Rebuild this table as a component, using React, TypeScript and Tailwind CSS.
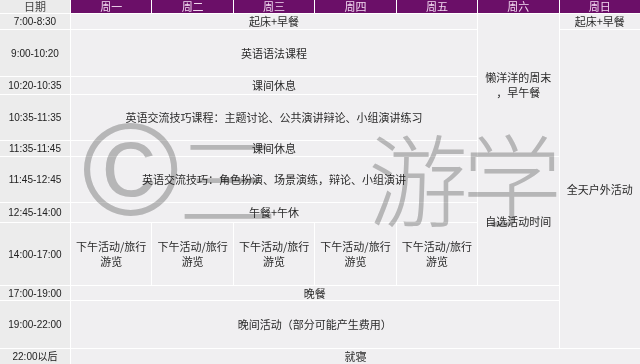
import React from 'react';

const cjk = { fontFamily: '"Noto Sans CJK SC", "Noto Sans", sans-serif' };
const num = { fontFamily: '"Liberation Sans", "Noto Sans CJK SC", sans-serif' };

const times = [
  '7:00-8:30',
  '9:00-10:20',
  '10:20-10:35',
  '10:35-11:35',
  '11:35-11:45',
  '11:45-12:45',
  '12:45-14:00',
  '14:00-17:00',
  '17:00-19:00',
  '19:00-22:00',
  '22:00以后',
];

const rowStart = [
  'row-start-2',
  'row-start-3',
  'row-start-4',
  'row-start-5',
  'row-start-6',
  'row-start-7',
  'row-start-8',
  'row-start-9',
  'row-start-10',
  'row-start-11',
  'row-start-12',
];

const days = ['周一', '周二', '周三', '周四', '周五', '周六', '周日'];
const dayCol = ['col-start-2', 'col-start-3', 'col-start-4', 'col-start-5', 'col-start-6', 'col-start-7', 'col-start-8'];

function Cell({ className, children }: { className: string; children?: React.ReactNode }) {
  return (
    <div className={`bg-[#f0eff1] flex items-center justify-center text-center text-[11px] leading-[15px] text-[#2a2a2a] ${className}`} style={cjk}>
      {children}
    </div>
  );
}

export default function App() {
  return (
    <div className="relative w-[640px] h-[364px] overflow-hidden bg-white">
      <div className="grid grid-cols-[70px_repeat(7,1fr)] grid-rows-[13px_15px_46px_17px_45px_15px_45px_19px_62px_14px_47px_15px] gap-px w-full h-full">
        {/* 表头 */}
        <div className="col-start-1 row-start-1 bg-[#ebebeb] flex items-center justify-center text-[11px] leading-[13px] text-[#444]" style={cjk}>
          日期
        </div>
        {days.map((d, i) => (
          <div key={d} className={`${dayCol[i]} row-start-1 bg-[#6b0f68] flex items-center justify-center text-[11px] leading-[13px] text-[#f2d9f0]`} style={cjk}>
            {d}
          </div>
        ))}

        {/* 时间列 */}
        {times.map((t, i) => (
          <div key={t} className={`col-start-1 ${rowStart[i]} bg-[#ececec] flex items-center justify-center text-[10px] leading-[13px] text-[#222]`} style={num}>
            {t}
          </div>
        ))}

        <Cell className="col-start-2 col-span-5 row-start-2">起床+早餐</Cell>
        <Cell className="col-start-7 row-start-2 row-span-5">
          <span>懒洋洋的周末<br />，早午餐</span>
        </Cell>
        <Cell className="col-start-8 row-start-2">起床+早餐</Cell>
        <Cell className="col-start-8 row-start-3 row-span-9">全天户外活动</Cell>

        <Cell className="col-start-2 col-span-5 row-start-3">英语语法课程</Cell>
        <Cell className="col-start-2 col-span-5 row-start-4">课间休息</Cell>
        <Cell className="col-start-2 col-span-5 row-start-5">英语交流技巧课程：主题讨论、公共演讲辩论、小组演讲练习</Cell>
        <Cell className="col-start-2 col-span-5 row-start-6">课间休息</Cell>
        <Cell className="col-start-2 col-span-5 row-start-7">英语交流技巧：角色扮演、场景演练，辩论、小组演讲</Cell>
        <Cell className="col-start-7 row-start-7 row-span-3">自选活动时间</Cell>
        <Cell className="col-start-2 col-span-5 row-start-8">午餐+午休</Cell>

        {dayCol.slice(0, 5).map((c) => (
          <Cell key={c} className={`${c} row-start-9`}>
            <span>下午活动/旅行<br />游览</span>
          </Cell>
        ))}

        <Cell className="col-start-2 col-span-6 row-start-10">晚餐</Cell>
        <Cell className="col-start-2 col-span-6 row-start-11">晚间活动（部分可能产生费用）</Cell>
        <Cell className="col-start-2 col-span-7 row-start-12">就寝</Cell>
      </div>

      {/* 水印 */}
      <div className="pointer-events-none absolute inset-0 mix-blend-multiply text-[#c2c2c2] font-light" style={cjk}>
        <span className="absolute left-[82px] top-[104px] text-[132px] leading-none" style={num}>©</span>
        <span className="absolute left-[178px] top-[126px] text-[100px] leading-none">三</span>
        <span className="absolute left-[368px] top-[126px] text-[100px] leading-none">游</span>
        <span className="absolute left-[462px] top-[126px] text-[100px] leading-none">学</span>
      </div>
    </div>
  );
}
